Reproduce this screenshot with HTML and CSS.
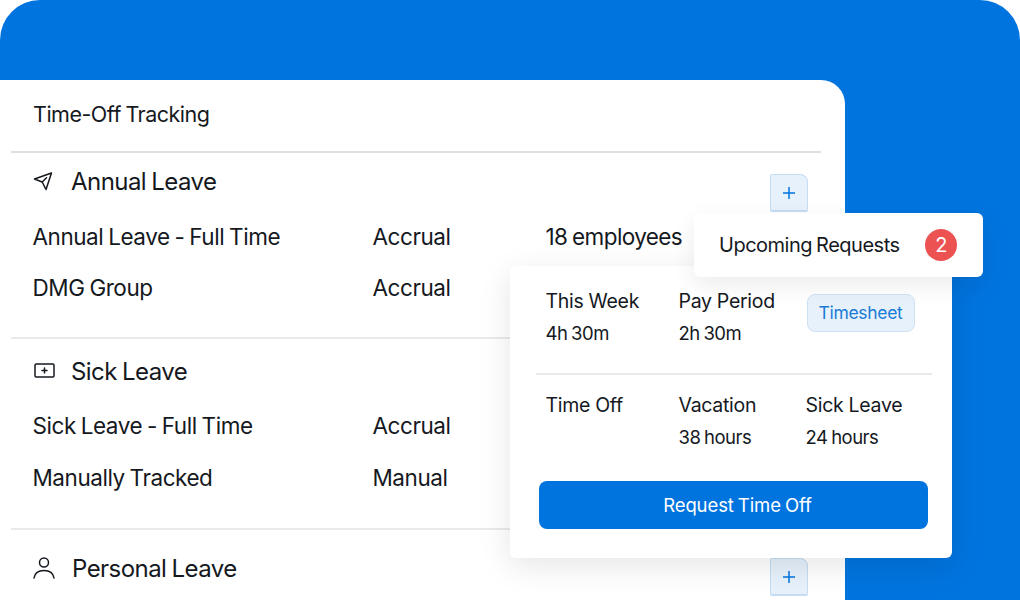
FILE: index.html
```html
<!DOCTYPE html>
<html lang="en">
<head>
    <meta charset="UTF-8">
    <title>Time-Off Tracking</title>
    <link rel="stylesheet" href="styles.css">
</head>
<body>
    <div class="stage">
        <div class="card">
            <h1 class="card-title">Time-Off Tracking</h1>

            <section class="group group-annual">
                <div class="group-head">
                    <div class="group-name">
                        <svg class="icon" width="20" height="20" viewBox="0 0 20 20" fill="none" stroke="#15191e" stroke-width="1.5" stroke-linejoin="round" stroke-linecap="round"><path d="M1.5 8 18.500 2 13 18.500 9.200 11 1.500 8Z"/><path d="M9.200 11 13.500 6.800"/></svg>
                        <span>Annual Leave</span>
                    </div>
                    <div class="plus"><svg width="14" height="14" viewBox="0 0 14 14" stroke="#0074de" stroke-width="1.5"><path d="M7 1v12M1 7h12"/></svg></div>
                </div>
                <div class="row"><span>Annual Leave - Full Time</span><span>Accrual</span><span class="row-count">18 employees</span></div>
                <div class="row"><span>DMG Group</span><span>Accrual</span></div>
            </section>

            <section class="group group-sick">
                <div class="group-head">
                    <div class="group-name">
                        <svg class="icon" width="22" height="20" viewBox="0 0 22 20" fill="none" stroke="#15191e" stroke-width="1.5" stroke-linecap="round" stroke-linejoin="round"><rect x="2" y="3" width="19" height="13" rx="1.200"/><path d="M11.500 7v5M9 9.500h5"/></svg>
                        <span>Sick Leave</span>
                    </div>
                </div>
                <div class="row"><span>Sick Leave - Full Time</span><span>Accrual</span></div>
                <div class="row"><span>Manually Tracked</span><span>Manual</span></div>
            </section>

            <section class="group group-personal">
                <div class="group-head">
                    <div class="group-name">
                        <svg class="icon" width="22" height="24" viewBox="0 0 22 24" fill="none" stroke="#15191e" stroke-width="1.5" stroke-linecap="round"><circle cx="11" cy="6.500" r="4.500"/><path d="M1 22c.8-5 4.500-7.500 10-7.500s9.200 2.500 10 7.500"/></svg>
                        <span>Personal Leave</span>
                    </div>
                    <div class="plus"><svg width="14" height="14" viewBox="0 0 14 14" stroke="#0074de" stroke-width="1.5"><path d="M7 1v12M1 7h12"/></svg></div>
                </div>
            </section>
        </div>

        <div class="panel">
            <div class="panel-top">
                <div class="stat"><div>This Week</div><div class="stat-value">4h 30m</div></div>
                <div class="stat"><div>Pay Period</div><div class="stat-value">2h 30m</div></div>
                <div class="timesheet">Timesheet</div>
            </div>
            <div class="panel-mid">
                <div class="stat"><div>Time Off</div></div>
                <div class="stat"><div>Vacation</div><div class="stat-value">38 hours</div></div>
                <div class="stat"><div>Sick Leave</div><div class="stat-value">24 hours</div></div>
            </div>
            <button class="request-btn">Request Time Off</button>
        </div>

        <div class="requests">
            <span>Upcoming Requests</span>
            <span class="count">2</span>
        </div>
    </div>
</body>
</html>
```

FILE: styles.css
```css
* {
    box-sizing: border-box;
}

body {
    margin: 0;
    background-color: #fff;
    font-family: Inter, "Liberation Sans", sans-serif;
    color: #15191e;
}

.stage {
    position: relative;
    width: 1020px;
    height: 600px;
    padding-top: 80px;
    overflow: hidden;
    background-color: #0074de;
    border-radius: 40px 40px 0 0;
}

.card {
    width: 845px;
    height: 520px;
    padding: 0 24px 0 11px;
    background-color: #fff;
    border-radius: 0 24px 0 0;
}

.card-title {
    height: 73px;
    margin: 0;
    padding: 20px 0 0 22px;
    font-size: 21.5px;
    line-height: 28px;
    font-weight: 400;
    letter-spacing: -0.5px;
    word-spacing: -1px;
    border-bottom: 2px solid #dedfe0;
}

.group {
    height: 191px;
    border-bottom: 2px solid #e8e9ea;
}

.group-annual {
    height: 186px;
}

.group-personal {
    border-bottom: none;
}

.group-head {
    display: flex;
    justify-content: space-between;
    padding-right: 13px;
    padding-left: 22px;
}

.group-annual .group-head {
    height: 58px;
    padding-top: 13px;
}

.group-sick .group-head {
    height: 61px;
    padding-top: 17px;
}

.group-personal .group-head {
    padding-top: 23px;
}

.group-name {
    display: flex;
    align-items: center;
    gap: 18px;
    height: 30px;
    font-size: 24px;
    letter-spacing: -0.55px;
    word-spacing: -1px;
}

.group-sick .group-name {
    gap: 16px;
}

.group-personal .group-name {
    gap: 17px;
}

.icon {
    flex-shrink: 0;
}

.plus {
    display: flex;
    align-items: center;
    justify-content: center;
    width: 38px;
    height: 38px;
    margin-top: 8px;
    background-color: #e6f1fb;
    border: 1px solid #c5dcf2;
    border-bottom-width: 2px;
    border-radius: 2px 8px 2px 2px;
}

.group-personal .plus {
    margin-top: 5px;
}

.row {
    display: grid;
    grid-template-columns: 340px 173px 1fr;
    height: 52px;
    padding-left: 21.5px;
    font-size: 22.5px;
    line-height: 52px;
    letter-spacing: -0.45px;
    word-spacing: -1px;
}

.group-annual .row {
    height: 51px;
}

.row-count {
    letter-spacing: -0.6px;
}

.requests {
    position: absolute;
    left: 694px;
    top: 213px;
    display: flex;
    align-items: center;
    justify-content: space-between;
    width: 289px;
    height: 64px;
    padding: 0 26px 0 25px;
    font-size: 20px;
    letter-spacing: -0.5px;
    word-spacing: -1px;
    background-color: #fff;
    border-radius: 6px;
    box-shadow: 0 8px 24px rgba(0, 0, 0, 0.08);
}

.count {
    display: flex;
    align-items: center;
    justify-content: center;
    width: 32px;
    height: 32px;
    color: #fff;
    background-color: #ec5252;
    border-radius: 50%;
}

.panel {
    position: absolute;
    left: 510px;
    top: 266px;
    width: 442px;
    height: 292px;
    padding: 0 24px 0 26px;
    background-color: #fff;
    border-radius: 6px;
    box-shadow: 0 8px 32px rgba(0, 0, 0, 0.1);
}

.panel-top,
.panel-mid {
    display: grid;
    grid-template-columns: 133px 127px 1fr;
    margin-right: -4px;
    padding-left: 9.500px;
    font-size: 19.5px;
    letter-spacing: -0.3px;
}

.panel-top {
    height: 109px;
    padding-top: 20px;
    border-bottom: 2px solid #e8e9ea;
}

.panel-mid {
    height: 106px;
    padding-top: 15px;
}

.stat div {
    height: 32px;
    line-height: 30px;
}

.stat .stat-value {
    font-size: 18.5px;
    letter-spacing: -0.5px;
    word-spacing: -1px;
}

.timesheet {
    width: 108px;
    height: 38px;
    margin-top: 8px;
    margin-left: 1px;
    color: #1a7bd6;
    font-size: 17.5px;
    line-height: 36px;
    text-align: center;
    background-color: #e6f1fb;
    border: 1px solid #cfe2f5;
    border-radius: 8px;
}

.request-btn {
    display: block;
    width: 389px;
    height: 48px;
    margin-left: 3px;
    padding-left: 14px;
    color: #fff;
    font-family: inherit;
    font-size: 18.5px;
    letter-spacing: -0.1px;
    word-spacing: -1px;
    background-color: #0074de;
    border: none;
    border-radius: 8px;
}
```
